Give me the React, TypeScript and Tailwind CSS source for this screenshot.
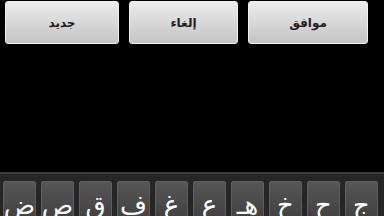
const buttons = [
  { label: "جديد", w: "w-[114px]" },
  { label: "إلغاء", w: "w-[109px]" },
  { label: "موافق", w: "w-[120px]" },
];

const keys = ["ض", "ص", "ق", "ف", "غ", "ع", "هـ", "خ", "ح", "ج"];

export default function App() {
  return (
    <div className="w-[384px] h-[216px] bg-black flex flex-col overflow-hidden" style={{ fontFamily: '"DejaVu Sans", sans-serif' }}>
      <div className="flex gap-[10px] pl-[5px] pt-px">
        {buttons.map((b) => (
          <div
            key={b.label}
            className={`${b.w} h-[43px] rounded-[3px] border border-[#f0f0f0] bg-gradient-to-b from-[#ececec] to-[#c4c4c4] flex items-center justify-center`}
          >
            <span dir="rtl" className="text-[12px] font-bold text-[#222]">
              {b.label}
            </span>
          </div>
        ))}
      </div>
      <div className="flex-1" />
      <div className="h-[44px] bg-[#262626] border-t-[2px] border-[#3a3a3a] pt-[7px] pl-[3px] flex gap-[5px] overflow-hidden">
        {keys.map((k) => (
          <div
            key={k}
            className="w-[33px] h-[44px] shrink-0 rounded-[2px] bg-gradient-to-b from-[#565656] to-[#3e3e3e] border border-[#5e5e5e] flex justify-center"
          >
            <span dir="rtl" className="text-[26px] leading-none text-white mt-[10px]">
              {k}
            </span>
          </div>
        ))}
      </div>
    </div>
  );
}
